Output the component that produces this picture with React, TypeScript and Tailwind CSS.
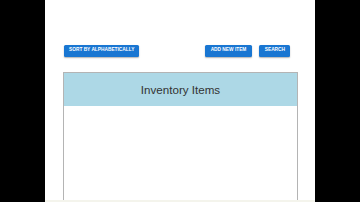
// Inventory page: black letterbox, white column, toolbar buttons and a table header.

export default function App() {
  return (
    <div className="flex h-[202px] w-[360px] justify-center overflow-hidden bg-black font-['Liberation_Sans',Arial,sans-serif]">
      <div className="flex w-[270px] flex-col bg-white">
        {/* ── Toolbar ── */}
        <div className="flex items-center justify-between pl-[19px] pr-[24.7px] pt-[44.5px]">
          <button className="h-[12px] rounded-[1.5px] bg-[#1976d2] px-[5px] text-[4.8px] font-bold uppercase leading-none text-white shadow-[0_1px_1.5px_rgba(0,0,0,0.3)]">
            Sort by Alphabetically
          </button>
          <div className="flex gap-[7.6px]">
            <button className="h-[12px] rounded-[1.5px] bg-[#1976d2] px-[5.5px] text-[4.8px] font-bold uppercase leading-none text-white shadow-[0_1px_1.5px_rgba(0,0,0,0.3)]">
              Add New Item
            </button>
            <button className="h-[12px] rounded-[1.5px] bg-[#1976d2] px-[5.3px] text-[4.8px] font-bold uppercase leading-none text-white shadow-[0_1px_1.5px_rgba(0,0,0,0.3)]">
              Search
            </button>
          </div>
        </div>

        {/* ── Table ── */}
        <div className="ml-[18.3px] mt-[15.5px] flex w-[234.4px] flex-1 flex-col border border-b-0 border-[#b4b4b4]">
          <div className="flex h-[33px] items-center justify-center bg-[#add8e6] text-[11.6px] text-[#333]">
            Inventory Items
          </div>
          <div className="flex-1 bg-white" />
        </div>

        {/* ── Bottom strip ── */}
        <div className="h-[2px] bg-[#f4f4ec]" />
      </div>
    </div>
  );
}
